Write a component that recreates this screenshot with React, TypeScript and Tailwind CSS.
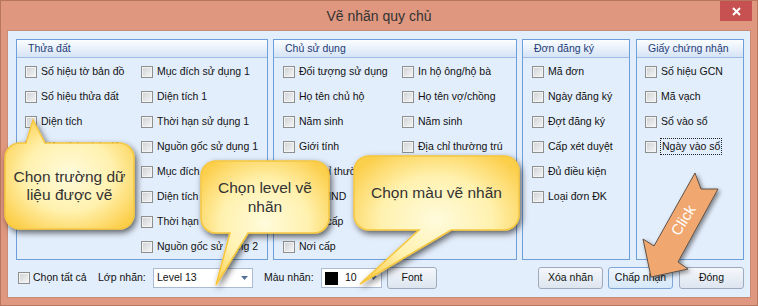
import React from "react";

const font = "font-['Liberation_Sans',Arial,sans-serif]";

function Box() {
  return (
    <span className="block h-[12px] w-[12px] shrink-0 border border-[#8e8f8f] bg-linear-to-br from-[#cdd0d4] to-[#f7f7f7] shadow-[inset_0_0_0_1px_#f3f3f3]" />
  );
}

function Item({ label, focus }: { label: string; focus?: boolean }) {
  return (
    <div className="flex h-[25px] items-center whitespace-nowrap">
      <Box />
      {focus ? (
        <span className="ml-[3px] border border-dotted border-[#222] px-[1px] leading-[15px]">{label}</span>
      ) : (
        <span className="ml-[4px]">{label}</span>
      )}
    </div>
  );
}

function Group({ title, className, children }: { title: string; className: string; children: React.ReactNode }) {
  return (
    <div className={"flex h-[221px] shrink-0 flex-col border border-[#6f9fd8] " + className}>
      <div className="flex h-[18px] items-center border-b border-[#9dbde6] bg-linear-to-b from-[#fbfdff] to-[#d6e4f6] pl-[11px] text-[#1d3b78]">
        {title}
      </div>
      <div className="flex pt-[1px]">{children}</div>
    </div>
  );
}

function Arrow() {
  return (
    <svg width="7" height="4" viewBox="0 0 7 4">
      <path d="M0 0 L7 0 L3.5 4 Z" fill="#56709a" />
    </svg>
  );
}

function Btn({ label, active }: { label: string; active?: boolean }) {
  return (
    <div
      className={
        "flex h-[22px] w-[65px] shrink-0 items-center justify-center rounded-[3px] border " +
        (active
          ? "border-[#7ea7d8] bg-linear-to-b from-[#eef6fd] to-[#d6e8f8]"
          : "border-[#9eabbf] bg-linear-to-b from-[#f4f7fb] to-[#dde5ef]")
      }
    >
      {label}
    </div>
  );
}

type Tail = { side: "top" | "bottom"; a: number; b: number; tx: number; ty: number };
function bubble(x0: number, y0: number, x1: number, y1: number, r: number, t: Tail) {
  const arcs = {
    tr: `A ${r} ${r} 0 0 1 ${x1} ${y0 + r}`,
    br: `A ${r} ${r} 0 0 1 ${x1 - r} ${y1}`,
    bl: `A ${r} ${r} 0 0 1 ${x0} ${y1 - r}`,
    tl: `A ${r} ${r} 0 0 1 ${x0 + r} ${y0}`,
  };
  if (t.side === "top") {
    return `M ${x0 + r} ${y0} L ${t.a} ${y0} L ${t.tx} ${t.ty} L ${t.b} ${y0} L ${x1 - r} ${y0} ${arcs.tr} L ${x1} ${y1 - r} ${arcs.br} L ${x0 + r} ${y1} ${arcs.bl} L ${x0} ${y0 + r} ${arcs.tl} Z`;
  }
  return `M ${x0 + r} ${y0} L ${x1 - r} ${y0} ${arcs.tr} L ${x1} ${y1 - r} ${arcs.br} L ${t.b} ${y1} L ${t.tx} ${t.ty} L ${t.a} ${y1} L ${x0 + r} ${y1} ${arcs.bl} L ${x0} ${y0 + r} ${arcs.tl} Z`;
}

function Overlay() {
  return (
    <svg className="pointer-events-none absolute left-0 top-0" width="758" height="306" viewBox="0 0 758 306">
      <defs>
        <radialGradient id="bub" cx="50%" cy="50%" r="62%">
          <stop offset="0" stopColor="#fffbdc" />
          <stop offset="0.55" stopColor="#fff1ae" />
          <stop offset="1" stopColor="#fccf4c" />
        </radialGradient>
        <filter id="sh" x="-20%" y="-20%" width="150%" height="150%">
          <feDropShadow dx="2" dy="3" stdDeviation="3" floodColor="#000" floodOpacity="0.6" />
        </filter>
        <filter id="sh2" x="-20%" y="-20%" width="150%" height="150%">
          <feDropShadow dx="2" dy="2" stdDeviation="2" floodColor="#000" floodOpacity="0.45" />
        </filter>
      </defs>
      <path
        d={bubble(4, 142, 133, 228, 15, { side: "top", a: 25, b: 44, tx: 32, ty: 119 })}
        fill="url(#bub)"
        stroke="#f6c63e"
        strokeWidth="1.5"
        filter="url(#sh)"
      />
      <path
        d={bubble(200, 160, 328, 232, 15, { side: "bottom", a: 229, b: 247, tx: 215, ty: 284 })}
        fill="url(#bub)"
        stroke="#f6c63e"
        strokeWidth="1.5"
        filter="url(#sh)"
      />
      <path
        d={bubble(353, 155, 518, 229, 15, { side: "bottom", a: 418, b: 450, tx: 359, ty: 283 })}
        fill="url(#bub)"
        stroke="#f6c63e"
        strokeWidth="1.5"
        filter="url(#sh)"
      />
      <polygon
        points="694,172 700,188 717,188 677,261 687,268 650,276 642,238 653,245"
        fill="#f1a870"
        stroke="#5e5148"
        strokeWidth="1"
        filter="url(#sh2)"
      />
      <text
        x="682"
        y="219"
        fill="#ffffff"
        fontSize="15"
        fontFamily="'Liberation Sans', Arial, sans-serif"
        textAnchor="middle"
        dominantBaseline="central"
        transform="rotate(-58 682 219)"
      >
        Click
      </text>
    </svg>
  );
}

export default function App() {
  return (
    <div className={"relative h-[306px] w-[758px] overflow-hidden border border-[#b9765f] bg-[#df977f] text-[10.5px] text-[#111] " + font}>
      <div className="grid h-[29px] grid-cols-[1fr_auto_1fr]">
        <div />
        <div className="flex items-center pt-[1px] text-[14px] text-[#333]">Vẽ nhãn quy chủ</div>
        <div className="flex justify-end pr-[5px]">
          <div className="flex h-[20px] w-[32px] items-center justify-center bg-[#c75050]">
            <svg width="9" height="9" viewBox="0 0 9 9">
              <path d="M1 1 L8 8 M8 1 L1 8" stroke="#fff" strokeWidth="2" />
            </svg>
          </div>
        </div>
      </div>

      <div className="mx-[6px] flex h-[268px] flex-col border border-[#c98b76] bg-[#e3eefc] pl-[8px] pr-[6px] pt-[8px]">
        <div className="flex">
          <Group title="Thửa đất" className="w-[252px]">
            <div className="w-[124px] shrink-0 pl-[8px]">
              <Item label="Số hiệu tờ bản đồ" />
              <Item label="Số hiệu thửa đất" />
              <Item label="Diện tích" />
              <Item label="Diện tích pháp lý" />
            </div>
            <div>
              <Item label="Mục đích sử dụng 1" />
              <Item label="Diện tích 1" />
              <Item label="Thời hạn sử dụng 1" />
              <Item label="Nguồn gốc sử dụng 1" />
              <Item label="Mục đích sử dụng 2" />
              <Item label="Diện tích 2" />
              <Item label="Thời hạn sử dụng 2" />
              <Item label="Nguồn gốc sử dụng 2" />
            </div>
          </Group>
          <Group title="Chủ sử dụng" className="ml-[5px] w-[244px]">
            <div className="w-[128px] shrink-0 pl-[9px]">
              <Item label="Đối tượng sử dụng" />
              <Item label="Họ tên chủ hộ" />
              <Item label="Năm sinh" />
              <Item label="Giới tính" />
              <Item label="Địa chỉ thường trú" />
              <Item label="Số CMND" />
              <Item label="Ngày cấp" />
              <Item label="Nơi cấp" />
            </div>
            <div>
              <Item label="In hộ ông/hộ bà" />
              <Item label="Họ tên vợ/chồng" />
              <Item label="Năm sinh" />
              <Item label="Địa chỉ thường trú" />
            </div>
          </Group>
          <Group title="Đơn đăng ký" className="ml-[5px] w-[108px]">
            <div className="pl-[9px]">
              <Item label="Mã đơn" />
              <Item label="Ngày đăng ký" />
              <Item label="Đợt đăng ký" />
              <Item label="Cấp xét duyệt" />
              <Item label="Đủ điều kiện" />
              <Item label="Loại đơn ĐK" />
            </div>
          </Group>
          <Group title="Giấy chứng nhận" className="ml-[6px] w-[108px]">
            <div className="pl-[8px]">
              <Item label="Số hiệu GCN" />
              <Item label="Mã vạch" />
              <Item label="Số vào sổ" />
              <Item label="Ngày vào sổ" focus />
            </div>
          </Group>
        </div>

        <div className="mt-[7px] flex h-[22px] items-center">
          <div className="ml-[2px] flex w-[80px] shrink-0 items-center">
            <Box />
            <span className="ml-[3px]">Chọn tất cả</span>
          </div>
          <div className="w-[55px] shrink-0">Lớp nhãn:</div>
          <div className="flex h-[20px] w-[100px] shrink-0 items-center justify-between border border-[#abbbd3] bg-white pl-[3px] pr-[4px]">
            <span>Level 13</span>
            <Arrow />
          </div>
          <div className="ml-[11px] w-[57px] shrink-0">Màu nhãn:</div>
          <div className="flex h-[20px] w-[61px] shrink-0 items-center border border-[#abbbd3] bg-white pl-[3px] pr-[4px]">
            <span className="block h-[13px] w-[13px] bg-black" />
            <span className="ml-[7px] flex-1">10</span>
            <Arrow />
          </div>
          <div className="ml-[5px] flex h-[22px] w-[50px] shrink-0 items-center justify-center rounded-[3px] border border-[#9eabbf] bg-linear-to-b from-[#f4f7fb] to-[#dde5ef]">
            Font
          </div>
          <div className="flex-1" />
          <Btn label="Xóa nhãn" />
          <div className="w-[5px] shrink-0" />
          <Btn label="Chấp nhận" active />
          <div className="w-[6px] shrink-0" />
          <Btn label="Đóng" />
        </div>
      </div>

      <Overlay />
      <div className="absolute left-[4px] top-[142px] flex h-[86px] w-[129px] items-center justify-center text-center text-[15.5px] leading-[18px] text-[#333]">
        Chọn trường dữ
        <br />
        liệu được vẽ
      </div>
      <div className="absolute left-[200px] top-[160px] flex h-[72px] w-[128px] items-center justify-center text-center text-[15.5px] leading-[19px] text-[#333]">
        Chọn level vẽ
        <br />
        nhãn
      </div>
      <div className="absolute left-[353px] top-[155px] flex h-[74px] w-[165px] items-center justify-center text-center text-[15.5px] leading-[18px] text-[#333]">
        Chọn màu vẽ nhãn
      </div>
    </div>
  );
}
